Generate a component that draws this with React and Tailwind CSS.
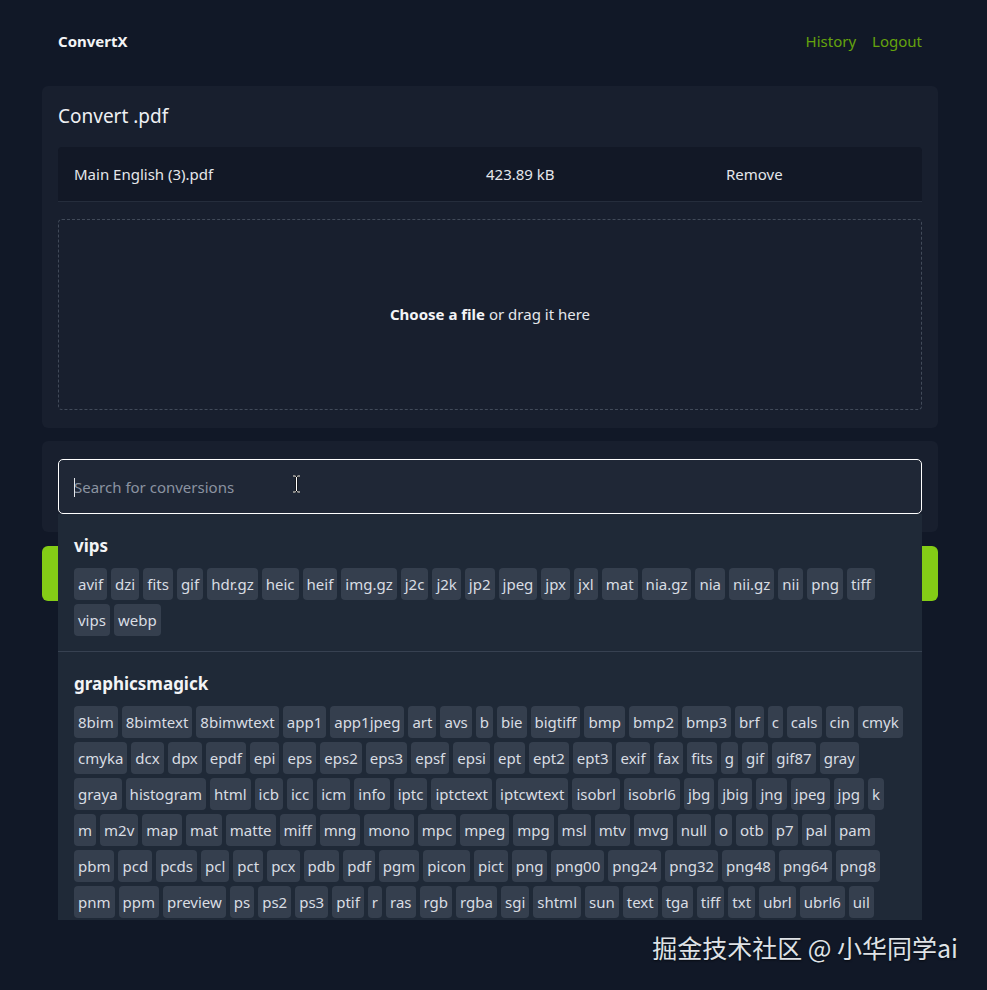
import React from 'react';

const vips = ['avif', 'dzi', 'fits', 'gif', 'hdr.gz', 'heic', 'heif', 'img.gz', 'j2c', 'j2k', 'jp2', 'jpeg', 'jpx', 'jxl', 'mat', 'nia.gz', 'nia', 'nii.gz', 'nii', 'png', 'tiff', 'vips', 'webp'];

const gm = [
  '8bim', '8bimtext', '8bimwtext', 'app1', 'app1jpeg', 'art', 'avs', 'b', 'bie', 'bigtiff', 'bmp', 'bmp2', 'bmp3', 'brf', 'c', 'cals', 'cin', 'cmyk',
  'cmyka', 'dcx', 'dpx', 'epdf', 'epi', 'eps', 'eps2', 'eps3', 'epsf', 'epsi', 'ept', 'ept2', 'ept3', 'exif', 'fax', 'fits', 'g', 'gif', 'gif87', 'gray',
  'graya', 'histogram', 'html', 'icb', 'icc', 'icm', 'info', 'iptc', 'iptctext', 'iptcwtext', 'isobrl', 'isobrl6', 'jbg', 'jbig', 'jng', 'jpeg', 'jpg', 'k',
  'm', 'm2v', 'map', 'mat', 'matte', 'miff', 'mng', 'mono', 'mpc', 'mpeg', 'mpg', 'msl', 'mtv', 'mvg', 'null', 'o', 'otb', 'p7', 'pal', 'pam',
  'pbm', 'pcd', 'pcds', 'pcl', 'pct', 'pcx', 'pdb', 'pdf', 'pgm', 'picon', 'pict', 'png', 'png00', 'png24', 'png32', 'png48', 'png64', 'png8',
  'pnm', 'ppm', 'preview', 'ps', 'ps2', 'ps3', 'ptif', 'r', 'ras', 'rgb', 'rgba', 'sgi', 'shtml', 'sun', 'text', 'tga', 'tiff', 'txt', 'ubrl', 'ubrl6', 'uil',
];

function Tag({ label }) {
  return (
    <span className="inline-block h-8 px-1 rounded-[4px] bg-[#353f4e] text-[#d9dde3] text-[15px] leading-8 whitespace-nowrap">
      {label}
    </span>
  );
}

function Engine({ name, targets, last }) {
  return (
    <div className={last ? 'px-4 pt-[18px]' : 'px-4 pt-[18px] pb-[15px] border-b border-[#374151]'}>
      <h3 className="text-[17px] font-bold leading-7 text-[#f3f4f6]">{name}</h3>
      <div className="mt-2 flex flex-wrap gap-1">
        {targets.map((t) => (
          <Tag key={t} label={t} />
        ))}
      </div>
    </div>
  );
}

export default function App() {
  return (
    <div className="relative min-h-screen bg-[#111827] font-['Noto_Sans',sans-serif] text-[#e5e7eb]">
      <div className="ml-[42px] w-[896px]">
        <header className="h-[86px] px-4 pb-[3px] flex items-center justify-between">
          <a className="text-[15px] font-bold text-[#f3f4f6]">ConvertX</a>
          <nav className="flex items-center gap-4 text-[15px] text-[#65a30d]">
            <a>History</a>
            <a>Logout</a>
          </nav>
        </header>

        <main>
          <article className="rounded-md bg-[#181f2e] px-4 pt-4 pb-[18px]">
            <h1 className="text-[19px] leading-7 text-[#eef0f3]">Convert .pdf</h1>
            <div className="mt-[17px] h-[55px] grid grid-cols-[412px_240px_1fr] items-center px-4 bg-[#121826] border-b border-[#252d3c] rounded-t text-[15px]">
              <span>Main English (3).pdf</span>
              <span>423.89 kB</span>
              <span>Remove</span>
            </div>
            <div className="mt-[17px] h-[191px] flex items-center justify-center rounded border border-dashed border-[#414a59] text-[15px]">
              <span>
                <b className="font-bold text-[#f3f4f6]">Choose a file</b> or drag it here
              </span>
            </div>
          </article>

          <article className="relative mt-[13px] rounded-md bg-[#181f2e] px-4 py-[18px]">
            <div className="relative">
              <input
                className="block w-full h-[55px] rounded-[5px] border border-white bg-[#1f2736] px-[15px] text-[15px] text-[#e5e7eb] placeholder:text-[#8b93a1] outline-none"
                placeholder="Search for conversions"
              />
              <span className="absolute left-4 top-[19px] h-[19px] w-px bg-[#e5e7eb]" />
              <svg className="absolute left-[234px] top-[16px]" width="9" height="18" viewBox="0 0 9 18">
                <path d="M1 1h2.5M5.5 1H8M4.5 2v14M1 17h2.5M5.5 17H8M3.5 1.5l1 1 1-1M3.5 16.5l1-1 1 1" stroke="#111" strokeWidth="2.2" fill="none" />
                <path d="M1 1h2.5M5.5 1H8M4.5 2v14M1 17h2.5M5.5 17H8M3.5 1.5l1 1 1-1M3.5 16.5l1-1 1 1" stroke="#fff" strokeWidth="1" fill="none" />
              </svg>
              <div className="absolute left-0 right-0 top-full z-10 h-[406px] overflow-hidden bg-[#1f2937]">
                <Engine name="vips" targets={vips} />
                <Engine name="graphicsmagick" targets={gm} last />
              </div>
            </div>
          </article>

          <button className="mt-[14px] block w-full h-[55px] rounded-md bg-[#84cc16] text-[#111827] font-bold">
            Convert
          </button>
        </main>
      </div>

      <div className="absolute right-[29px] top-[929px] text-[25px] leading-[36px] text-[#dfe2e6] font-['Noto_Sans_CJK_SC',sans-serif] [text-shadow:0_1px_2px_rgba(0,0,0,0.6)]">
        掘金技术社区 @ 小华同学ai
      </div>
    </div>
  );
}
